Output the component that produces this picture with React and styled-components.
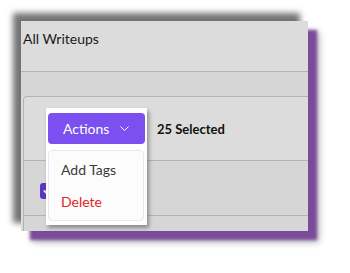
import styled, { createGlobalStyle } from 'styled-components';

const GlobalStyle = createGlobalStyle`
  body {
    margin: 0;
    background: #fff;
    font-family: Lato, "Open Sans", sans-serif;
  }
`;

const Page = styled.div`
  padding: 21px;
`;

const Frame = styled.div`
  width: 287px;
  height: 210px;
  background: #dcdcdc;
  overflow: hidden;
  box-shadow: -8px -8px 6px rgba(0, 0, 0, 0.55), 9px 9px 3px #7b4b9a,
    11px 11px 7px rgba(0, 0, 0, 0.3);
`;

const Header = styled.div`
  box-sizing: border-box;
  height: 51px;
  padding: 8px 2px 0;
  font-size: 14px;
  line-height: 20px;
  color: #1a1a1a;
  border-bottom: 1px solid #b3b3b3;
`;

const Band = styled.div`
  height: 24px;
  background: #d6d6d6;
`;

const Card = styled.div`
  margin-left: 2px;
  width: 300px;
  border: 1px solid #b3b3b3;
  border-bottom: none;
  border-radius: 4px 4px 0 0;
  background: #dcdcdc;
`;

const Toolbar = styled.div`
  display: flex;
  align-items: center;
  gap: 10px;
  height: 63px;
  padding-left: 22px;
  border-bottom: 1px solid #b3b3b3;
`;

const Dropdown = styled.div`
  position: relative;
  z-index: 2;
  padding: 5px 2px;

  &::before {
    content: '';
    position: absolute;
    left: 0;
    top: 0;
    width: 100%;
    height: 117px;
    background: #fff;
    box-shadow: 2px 3px 4px rgba(0, 0, 0, 0.35);
    z-index: -1;
  }
`;

const ActionButton = styled.button`
  display: flex;
  align-items: center;
  gap: 11px;
  width: 97px;
  height: 31px;
  padding: 0 0 0 15px;
  border: none;
  border-radius: 4px;
  background: #7b4ff0;
  color: #fff;
  font-family: inherit;
  font-size: 14px;
`;

const Menu = styled.div`
  position: absolute;
  top: 42px;
  left: 2px;
  width: 96px;
  height: 71px;
  box-sizing: border-box;
  padding: 2px 0;
  background: #fcfcfc;
  border: 1px solid #e9e9e9;
  border-radius: 4px;
`;

const MenuItem = styled.div`
  display: flex;
  align-items: center;
  height: 32px;
  padding-left: 12px;
  font-size: 14px;
  color: ${(p) => (p.$danger ? '#e0262b' : '#3a3a3a')};
`;

const Selected = styled.span`
  font-size: 13px;
  font-weight: 700;
  color: #111;
`;

const Row = styled.div`
  display: flex;
  align-items: center;
  height: ${(p) => p.$h}px;
  padding-left: 16px;
  background: #d6d6d6;
  border-bottom: 1px solid #b3b3b3;
`;

const Checkbox = styled.div`
  display: flex;
  align-items: center;
  justify-content: center;
  width: 16px;
  height: 16px;
  margin-top: 5px;
  border-radius: 3px;
  background: #5a36c4;
`;

export default function App() {
  return (
    <Page>
      <GlobalStyle />
      <Frame>
        <Header>All Writeups</Header>
        <Band />
        <Card>
          <Toolbar>
            <Dropdown>
              <ActionButton>
                Actions
                <svg width="9" height="5" viewBox="0 0 9 5">
                  <polyline
                    points="0.5,0.5 4.5,4.5 8.5,0.5"
                    fill="none"
                    stroke="#fff"
                    strokeWidth="1"
                  />
                </svg>
              </ActionButton>
              <Menu>
                <MenuItem>Add Tags</MenuItem>
                <MenuItem $danger>Delete</MenuItem>
              </Menu>
            </Dropdown>
            <Selected>25 Selected</Selected>
          </Toolbar>
          <Row $h={54}>
            <Checkbox>
              <svg width="12" height="12" viewBox="0 0 12 12">
                <polyline
                  points="2.5,6 5,8.5 9.5,3.5"
                  fill="none"
                  stroke="#e8e4f5"
                  strokeWidth="2"
                  strokeLinecap="round"
                  strokeLinejoin="round"
                />
              </svg>
            </Checkbox>
          </Row>
          <Row $h={30} />
        </Card>
      </Frame>
    </Page>
  );
}
